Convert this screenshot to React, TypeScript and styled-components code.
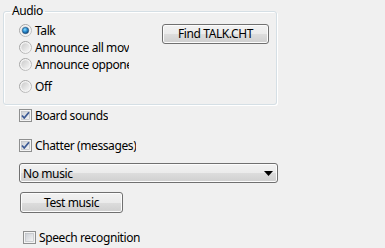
import React from "react";
import styled, { createGlobalStyle } from "styled-components";

const Global = createGlobalStyle`
  html, body { margin: 0; padding: 0; background: #f0f0f0; }
  body { font-family: "Noto Sans", "Open Sans", sans-serif; font-size: 12px; letter-spacing: -0.4px; color: #000; }
`;

const Page = styled.div`
  width: 385px;
  height: 248px;
  overflow: hidden;
  display: flex;
  flex-direction: column;
  align-items: flex-start;
`;

const Group = styled.fieldset`
  margin: 4px 0 0 3px;
  padding: 0 0 9px 0;
  width: 274px;
  box-sizing: border-box;
  border: 1px solid #d5dfe5;
  border-radius: 3px;
  box-shadow: inset 1px 1px 0 #fff, 1px 1px 0 #fff;
  min-inline-size: 0;
`;

const Legend = styled.legend`
  margin-left: 6px;
  padding: 0 2px;
  line-height: 14px;
  height: 14px;
`;

const GroupBody = styled.div`
  display: grid;
  grid-template-columns: 143px auto;
  padding: 4px 0 0 15px;
`;

const RadioList = styled.div`
  display: flex;
  flex-direction: column;
`;

const Row = styled.div<{ $top?: number; $left?: number; $width?: number }>`
  display: flex;
  align-items: center;
  height: 17px;
  gap: 3px;
  margin-top: ${(p) => p.$top ?? 0}px;
  margin-left: ${(p) => p.$left ?? 0}px;
  width: ${(p) => (p.$width ? `${p.$width}px` : "auto")};
  white-space: nowrap;
  overflow: hidden;
`;

const Label = styled.span`
  line-height: 17px;
`;

const Button = styled.button<{ $w: number; $h: number; $top?: number; $left?: number }>`
  font: inherit;
  letter-spacing: inherit;
  color: #000;
  width: ${(p) => p.$w}px;
  height: ${(p) => p.$h}px;
  margin: ${(p) => p.$top ?? 0}px 0 0 ${(p) => p.$left ?? 0}px;
  padding: 0;
  border: 1px solid #707070;
  border-radius: 3px;
  background: linear-gradient(#f2f2f2 0%, #ebebeb 50%, #dddddd 50%, #cfcfcf 100%);
  box-shadow: inset 0 0 0 1px #fcfcfc;
  box-sizing: border-box;
  line-height: 16px;
  text-align: center;
`;

const Select = styled.div`
  display: flex;
  align-items: center;
  justify-content: space-between;
  width: 259px;
  height: 20px;
  margin: 9px 0 0 19px;
  padding: 0 4px 0 3px;
  box-sizing: border-box;
  border: 1px solid #707070;
  border-radius: 3px;
  background: linear-gradient(#f2f2f2 0%, #ebebeb 50%, #dddddd 50%, #cfcfcf 100%);
  box-shadow: inset 0 0 0 1px #fcfcfc;
`;

const Radio = ({ checked }: { checked?: boolean }) => (
  <svg width="13" height="13" viewBox="0 0 13 13" style={{ flex: "none" }}>
    <defs>
      <linearGradient id="rOuter" x1="0" y1="0" x2="1" y2="1">
        <stop offset="0" stopColor="#9a9a9a" />
        <stop offset="1" stopColor="#c8c8c8" />
      </linearGradient>
      <linearGradient id="rInner" x1="0" y1="0" x2="1" y2="1">
        <stop offset="0" stopColor="#cbcbcb" />
        <stop offset="1" stopColor="#f6f6f6" />
      </linearGradient>
      <radialGradient id="rDot" cx="0.4" cy="0.35" r="0.7">
        <stop offset="0" stopColor="#8ee1ff" />
        <stop offset="0.5" stopColor="#2a8bd0" />
        <stop offset="1" stopColor="#0f3f6e" />
      </radialGradient>
    </defs>
    <circle cx="6.5" cy="6.5" r="6" fill="#f4f4f4" stroke="url(#rOuter)" strokeWidth="1" />
    <circle cx="6.5" cy="6.5" r="4.2" fill="url(#rInner)" />
    {checked && <circle cx="6.5" cy="6.5" r="3.2" fill="url(#rDot)" stroke="#1a4a78" strokeWidth="0.5" />}
  </svg>
);

const Check = ({ checked }: { checked?: boolean }) => (
  <svg width="13" height="13" viewBox="0 0 13 13" style={{ flex: "none" }}>
    <defs>
      <linearGradient id="cIn" x1="0" y1="0" x2="1" y2="1">
        <stop offset="0" stopColor="#cbcfd5" />
        <stop offset="1" stopColor="#f6f6f6" />
      </linearGradient>
    </defs>
    <rect x="0.5" y="0.5" width="12" height="12" fill="#f4f4f4" stroke="#8e8f8f" />
    <rect x="2.5" y="2.5" width="8" height="8" fill="url(#cIn)" stroke="#b4b8bd" strokeWidth="0.6" />
    {checked && (
      <path d="M3 6.5 L5.2 9 L10 3.2" fill="none" stroke="#3c5a94" strokeWidth="1.8" strokeLinejoin="round" />
    )}
  </svg>
);

const Arrow = () => (
  <svg width="9" height="5" viewBox="0 0 9 5">
    <path d="M0 0 H9 L4.5 5 Z" fill="#000" />
  </svg>
);

export default function App() {
  return (
    <>
      <Global />
      <Page>
        <Group>
          <Legend>Audio</Legend>
          <GroupBody>
            <RadioList>
              <Row $width={110}>
                <Radio checked />
                <Label>Talk</Label>
              </Row>
              <Row $width={110}>
                <Radio />
                <Label>Announce all moves</Label>
              </Row>
              <Row $width={110}>
                <Radio />
                <Label>Announce opponent moves</Label>
              </Row>
              <Row $width={110} $top={5}>
                <Radio />
                <Label>Off</Label>
              </Row>
            </RadioList>
            <div>
              <Button $w={107} $h={20} $top={2}>Find TALK.CHT</Button>
            </div>
          </GroupBody>
        </Group>
        <Row $top={2} $left={19}>
          <Check checked />
          <Label>Board sounds</Label>
        </Row>
        <Row $top={13} $left={19}>
          <Check checked />
          <Label>Chatter (messages)</Label>
        </Row>
        <Select>
          <Label>No music</Label>
          <Arrow />
        </Select>
        <Button $w={103} $h={21} $top={9} $left={20}>Test music</Button>
        <Row $top={16} $left={23}>
          <Check />
          <Label>Speech recognition</Label>
        </Row>
      </Page>
    </>
  );
}
